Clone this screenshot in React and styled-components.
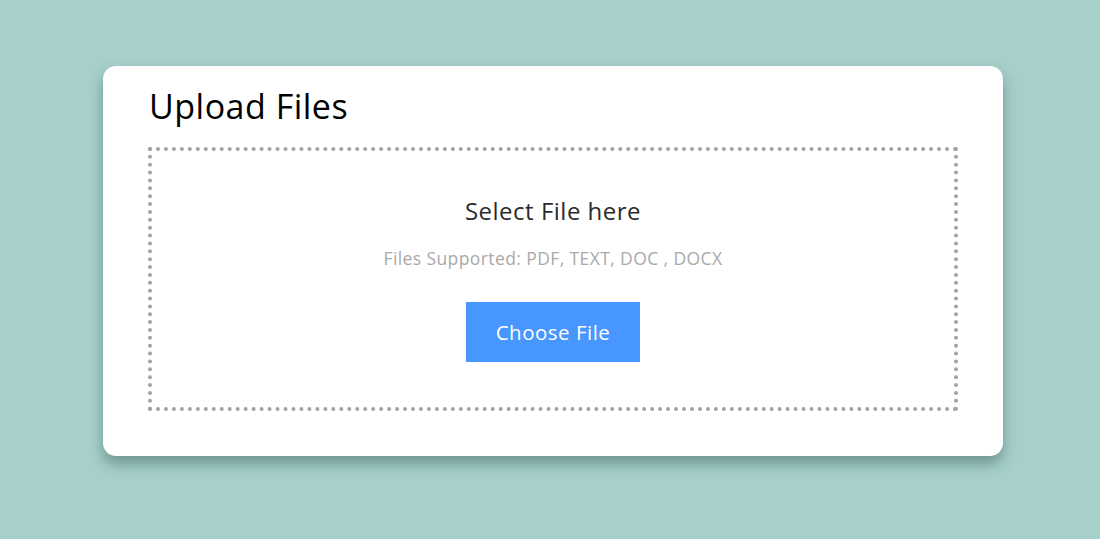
import React from "react";
import styled, { createGlobalStyle } from "styled-components";

const Global = createGlobalStyle`
  html, body { margin: 0; padding: 0; }
  body {
    background: #a7d0cb;
    font-family: "Open Sans", "Noto Sans", sans-serif;
    height: 539px;
    overflow: hidden;
  }
`;

const Page = styled.div`
  display: flex;
  justify-content: center;
  padding: 66px 0 0 6px;
`;

const Card = styled.div`
  width: 900px;
  height: 390px;
  box-sizing: border-box;
  background: #fff;
  border-radius: 13px;
  box-shadow: 0 8px 14px rgba(40, 80, 76, 0.45);
  display: flex;
  flex-direction: column;
  align-items: center;
`;

const Title = styled.h2`
  align-self: stretch;
  margin: 18px 0 0 46px;
  font-size: 34px;
  font-weight: 400;
  line-height: 44px;
  color: #000;
  letter-spacing: 0.5px;
`;

const DropZone = styled.div`
  width: 90%;
  height: 264px;
  box-sizing: border-box;
  margin-top: 19px;
  border: 4px dotted #a3a3a3;
  display: flex;
  flex-direction: column;
  align-items: center;
  padding-top: 44px;
`;

const Heading = styled.div`
  font-size: 24px;
  line-height: 32px;
  color: #2b2b2b;
  letter-spacing: 0.5px;
`;

const Sub = styled.div`
  margin-top: 19px;
  font-size: 17.5px;
  line-height: 24px;
  color: #a9a9a9;
  letter-spacing: 0.4px;
`;

const Button = styled.button`
  margin-top: 32px;
  width: 174px;
  height: 60px;
  border: none;
  padding: 0;
  background: #4896ff;
  color: #fff;
  font-family: inherit;
  font-size: 20.5px;
  letter-spacing: 0.5px;
  cursor: pointer;
`;

export default function App() {
  return (
    <>
      <Global />
      <Page>
        <Card>
          <Title>Upload Files</Title>
          <DropZone>
            <Heading>Select File here</Heading>
            <Sub>Files Supported: PDF, TEXT, DOC , DOCX</Sub>
            <Button>Choose File</Button>
          </DropZone>
        </Card>
      </Page>
    </>
  );
}
